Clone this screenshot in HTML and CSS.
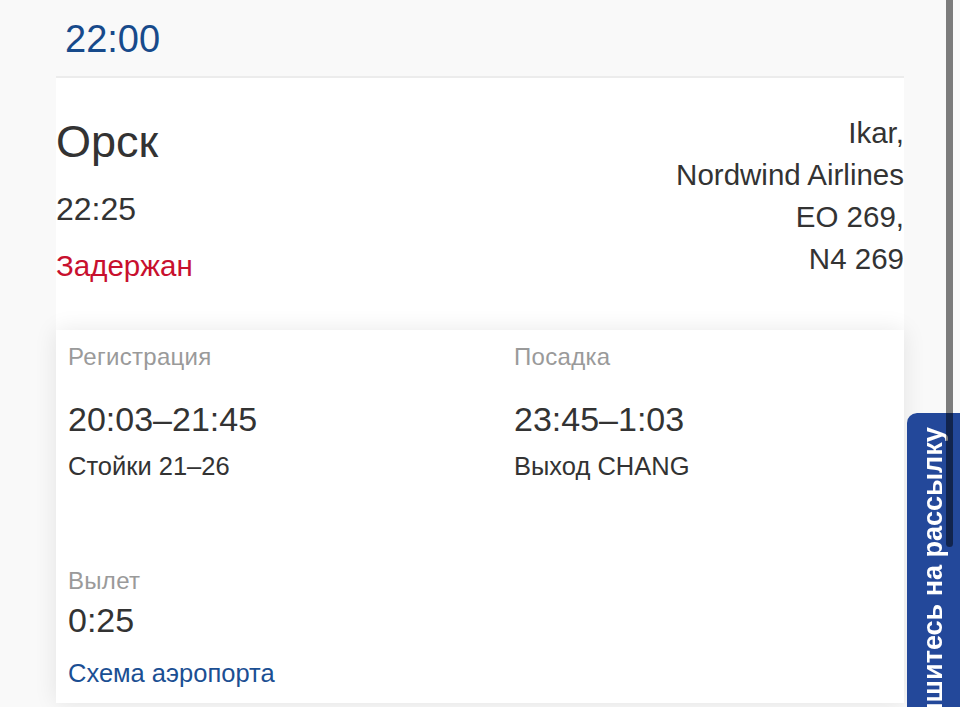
FILE: index.html
```html
<!DOCTYPE html>
<html lang="ru">
<head>
    <meta charset="UTF-8">
    <meta name="viewport" content="width=device-width, initial-scale=1.0">
    <title>Рейс EO 269</title>
    <link rel="stylesheet" href="styles.css">
</head>
<body>
    <div class="page">
        <div class="time-head">22:00</div>

        <div class="flight">
            <div class="flight-main">
                <div class="city">Орск</div>
                <div class="flight-time">22:25</div>
                <div class="status">Задержан</div>
            </div>
            <div class="flight-info">
                <div>Ikar,</div>
                <div>Nordwind Airlines</div>
                <div>EO 269,</div>
                <div>N4 269</div>
            </div>
        </div>

        <div class="details">
            <div class="detail detail-top">
                <div class="detail-label">Регистрация</div>
                <div class="detail-value detail-value-top">20:03–21:45</div>
                <div class="detail-sub">Стойки 21–26</div>
            </div>
            <div class="detail detail-top">
                <div class="detail-label">Посадка</div>
                <div class="detail-value detail-value-top">23:45–1:03</div>
                <div class="detail-sub">Выход CHANG</div>
            </div>
            <div class="detail detail-bottom">
                <div class="detail-label">Вылет</div>
                <div class="detail-value">0:25</div>
                <a class="map-link" href="#">Схема аэропорта</a>
            </div>
        </div>
    </div>

    <div class="subscribe-tab">Подпишитесь на рассылку</div>
    <div class="scroll-thumb"></div>
</body>
</html>
```

FILE: styles.css
```css
html, body {
    margin: 0;
    height: 100%;
    overflow: hidden;
}
body {
    background-color: #f9f9f9;
    font-family: "Liberation Sans", Arial, sans-serif;
    color: #333;
}
.page {
    width: 848px;
    margin-left: 56px;
}
.time-head {
    padding: 17px 0 15px 9px;
    font-size: 38px;
    line-height: 44px;
    color: #174a8b;
    border-bottom: 2px solid #ececec;
}
.flight {
    display: flex;
    justify-content: space-between;
    height: 252px;
    background-color: #fff;
}
.flight-main {
    padding-top: 39px;
}
.city {
    font-size: 45px;
    line-height: 50px;
}
.flight-time {
    margin-top: 22px;
    font-size: 32px;
    line-height: 40px;
}
.status {
    margin-top: 19px;
    font-size: 29.5px;
    line-height: 36px;
    color: #c8102e;
}
.flight-info {
    padding-top: 34px;
    text-align: right;
    font-size: 29.5px;
    line-height: 42px;
}
.details {
    display: grid;
    grid-template-columns: 446px 1fr;
    padding: 13px 12px 15px;
    background-color: #fff;
    box-shadow: 0 0 22px rgba(0, 0, 0, 0.09);
}
.detail-top {
    height: 139px;
}
.detail-bottom {
    margin-top: 85px;
}
.detail-label {
    font-size: 24px;
    line-height: 28px;
    letter-spacing: 0.3px;
    color: #9a9a9a;
}
.detail-value {
    margin-top: 5px;
    font-size: 34px;
    line-height: 40px;
}
.detail-value-top {
    margin-top: 28px;
}
.detail-sub {
    margin-top: 12px;
    font-size: 25.5px;
    line-height: 30px;
}
.map-link {
    display: block;
    margin-top: 18px;
    font-size: 25.5px;
    line-height: 30px;
    color: #1b4f93;
    text-decoration: none;
}
.subscribe-tab {
    position: fixed;
    left: 907px;
    top: 413px;
    width: 60px;
    height: 420px;
    box-sizing: border-box;
    padding: 0 11px 14px 0;
    background-color: #23489a;
    border-bottom-right-radius: 10px;
    writing-mode: vertical-rl;
    transform: rotate(180deg);
    text-align: end;
    color: #fff;
    font-weight: bold;
    font-size: 27px;
    line-height: 30px;
    white-space: nowrap;
}
.scroll-thumb {
    position: fixed;
    left: 946px;
    top: 0;
    width: 7px;
    height: 547px;
    border-radius: 0 0 4px 4px;
    background-color: rgba(0, 0, 0, 0.5);
}
```
